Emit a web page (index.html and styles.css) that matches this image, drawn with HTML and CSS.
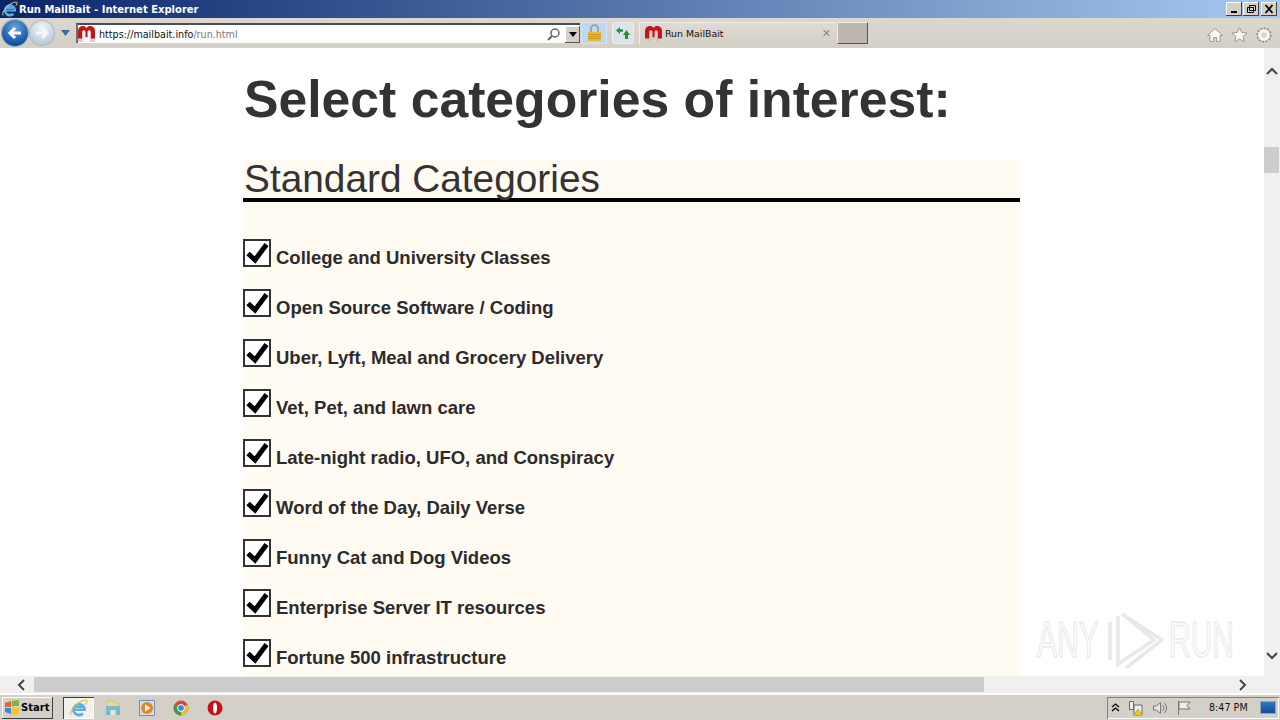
FILE: index.html
```html
<!DOCTYPE html>
<html lang="en">
<head>
    <meta charset="UTF-8">
    <title>Run MailBait - Internet Explorer</title>
    <link rel="stylesheet" href="styles.css">
</head>
<body>
    <svg class="defs" width="0" height="0">
        <symbol id="magnet" viewBox="1 2.500 16 13.500" preserveAspectRatio="none">
            <path d="M1 16V7a4.500 4.500 0 0 1 8-2.800A4.500 4.500 0 0 1 17 7v9h-4V7.500a1.500 1.500 0 0 0-3 0V12H8V7.500a1.500 1.500 0 0 0-3 0V16z" fill="#c4141c"/>
            <path d="M1 13h4v3H1zM13 13h4v3h-4z" fill="#d0d0d0"/>
        </symbol>
        <symbol id="check" viewBox="0 0 24 24">
            <path d="M3 12.500L10 19 21.500 3.500" fill="none" stroke="#000" stroke-width="5"/>
        </symbol>
        <symbol id="ie" viewBox="0 0 16 16">
            <path d="M3 9.500h10a5 5 0 1 0-1.500 3.500M4 6.800h7M3 9.500a5 5 0 0 0 8 3.500" fill="none" stroke="#58aee4" stroke-width="2.200"/>
            <path d="M1 14.500C-1 11 7 1 14.500 1c1.500 1 0 3-1 4" fill="none" stroke="#e8c040" stroke-width="1"/>
        </symbol>
    </svg>

    <div class="titlebar">
        <svg class="ie-logo" width="16" height="16"><use href="#ie"/></svg>
        <span class="title-text">Run MailBait - Internet Explorer</span>
        <div class="win-buttons">
            <span class="win-btn"><svg width="11" height="10"><path d="M2 7h6v2H2z" fill="#000"/></svg></span>
            <span class="win-btn"><svg width="11" height="10"><path d="M3.500 1.500h6v5h-6zM1.500 3.500h6v5h-6z" fill="#d4d0c8" stroke="#000"/></svg></span>
            <span class="win-btn win-close"><svg width="11" height="10"><path d="M1.500 1l7 8M8.500 1l-7 8" stroke="#000" stroke-width="1.800"/></svg></span>
        </div>
    </div>

    <div class="toolbar">
        <span class="nav-btn nav-back">
            <svg width="18" height="18" viewBox="0 0 18 18"><path d="M15 9H5M9 4L4 9l5 5" fill="none" stroke="#fff" stroke-width="3"/></svg>
        </span>
        <span class="nav-btn nav-forward">
            <svg width="18" height="18" viewBox="0 0 18 18"><path d="M3 9h10M9 4l5 5-5 5" fill="none" stroke="#f4f7fa" stroke-width="3"/></svg>
        </span>
        <svg class="nav-drop" width="9" height="6"><path d="M0 0h9L4.500 6z" fill="#2f6fa8"/></svg>

        <div class="address">
            <svg class="fav" width="17" height="16"><use href="#magnet"/></svg>
            <span class="url"><span class="url-dark">https://mailbait.info</span>/run.html</span>
            <svg class="search" width="15" height="15" viewBox="0 0 15 15"><circle cx="9" cy="6" r="4" fill="none" stroke="#666" stroke-width="1.500"/><path d="M6 9l-4 4" stroke="#666" stroke-width="2"/></svg>
            <span class="addr-drop"><svg width="8" height="5"><path d="M0 0h8L4 5z" fill="#000"/></svg></span>
        </div>

        <span class="lock">
            <svg width="15" height="18" viewBox="0 0 15 18"><path d="M4 8V4.500a3.500 3.500 0 0 1 7 0V8" fill="none" stroke="#a89868" stroke-width="1.600"/><path d="M1 8h13v9H1z" fill="#e8b830"/><path d="M1 10.500h13M1 12.500h13M1 14.500h13" stroke="#c89820"/></svg>
        </span>
        <span class="refresh">
            <svg width="16" height="14" viewBox="0 0 16 14"><path d="M1 4.500L5 1v2.200h3v2.600H5V8zM15 9l-3.500-5L8 9h2v4h3V9z" fill="#2f8a3a"/></svg>
        </span>

        <div class="tab">
            <svg width="17" height="16"><use href="#magnet"/></svg>
            <span class="tab-title">Run MailBait</span>
            <span class="tab-close">&#10005;</span>
        </div>
        <span class="new-tab"></span>

        <div class="tools">
            <svg width="16" height="16" viewBox="0 0 16 16"><path d="M.500 8.500L8 1.500l7.500 7h-2.500v6H9.500v-4h-3v4H3v-6z" fill="#f8f7f3" stroke="#8c8c86" stroke-width=".8"/></svg>
            <svg width="17" height="16" viewBox="0 0 16 16"><path d="M8 .500l2.200 4.900 5.300.6-4 3.500 1.200 5.300L8 12.100l-4.700 2.700 1.200-5.300-4-3.500 5.300-.6z" fill="#f8f7f3" stroke="#8c8c86" stroke-width=".8"/></svg>
            <svg width="16" height="16" viewBox="0 0 16 16"><circle cx="8" cy="8" r="4.300" fill="none" stroke="#f8f7f3" stroke-width="3"/><circle cx="8" cy="8" r="6.800" fill="none" stroke="#8c8c86" stroke-width="1.600" stroke-dasharray="2 1.500"/></svg>
        </div>
    </div>

    <div class="viewport">
        <main class="page">
            <h1>Select categories of interest:</h1>
            <section class="categories">
                <h2>Standard Categories</h2>
                <ul class="cat-list">
                    <li><span class="box"><svg width="24" height="24"><use href="#check"/></svg></span>College and University Classes</li>
                    <li><span class="box"><svg width="24" height="24"><use href="#check"/></svg></span>Open Source Software / Coding</li>
                    <li><span class="box"><svg width="24" height="24"><use href="#check"/></svg></span>Uber, Lyft, Meal and Grocery Delivery</li>
                    <li><span class="box"><svg width="24" height="24"><use href="#check"/></svg></span>Vet, Pet, and lawn care</li>
                    <li><span class="box"><svg width="24" height="24"><use href="#check"/></svg></span>Late-night radio, UFO, and Conspiracy</li>
                    <li><span class="box"><svg width="24" height="24"><use href="#check"/></svg></span>Word of the Day, Daily Verse</li>
                    <li><span class="box"><svg width="24" height="24"><use href="#check"/></svg></span>Funny Cat and Dog Videos</li>
                    <li><span class="box"><svg width="24" height="24"><use href="#check"/></svg></span>Enterprise Server IT resources</li>
                    <li><span class="box"><svg width="24" height="24"><use href="#check"/></svg></span>Fortune 500 infrastructure</li>
                </ul>
            </section>
        </main>

        <div class="watermark">
            <span class="wm-text">ANY</span>
            <svg width="60" height="64" viewBox="0 0 60 64"><path d="M4 14v38M12 8v48l36-24L16 6l40 26-36 28" fill="none" stroke="#e8e8e8" stroke-width="3.500"/></svg>
            <span class="wm-text">RUN</span>
        </div>

        <div class="vscroll">
            <svg class="arrow" width="16" height="16"><path d="M3 10l5-5 5 5" fill="none" stroke="#444" stroke-width="2"/></svg>
            <div class="vtrack"><div class="vthumb"></div></div>
            <svg class="arrow" width="16" height="16"><path d="M3 5l5 5 5-5" fill="none" stroke="#444" stroke-width="2"/></svg>
        </div>
    </div>

    <div class="hscroll">
        <svg class="arrow" width="16" height="16"><path d="M10 3L5 8l5 5" fill="none" stroke="#444" stroke-width="2"/></svg>
        <div class="htrack"><div class="hthumb"></div></div>
        <svg class="arrow" width="16" height="16"><path d="M6 3l5 5-5 5" fill="none" stroke="#444" stroke-width="2"/></svg>
    </div>

    <div class="taskbar">
        <span class="start">
            <svg width="16" height="15" viewBox="0 0 16 15"><path d="M1 3l6-2v6H1z" fill="#e8622a"/><path d="M8 1l7-1v6H8z" fill="#7ab83c"/><path d="M1 8h6v6l-6-2z" fill="#3a8ad8"/><path d="M8 8h7v6l-7 1z" fill="#f2c230"/></svg>
            Start
        </span>
        <span class="task-ie">
            <svg width="18" height="18"><use href="#ie"/></svg>
        </span>
        <span class="task-icon">
            <svg width="16" height="16" viewBox="0 0 16 16"><path d="M2 1h6l1 2h5v5H2z" fill="#ecd98c" stroke="#c8b468" stroke-width=".6"/><path d="M1 6h14v9H1z" fill="#7fb8cc"/><path d="M5.500 10h5v5h-5z" fill="#e8e6e0"/></svg>
        </span>
        <span class="task-icon">
            <svg width="16" height="16" viewBox="0 0 16 16"><path d="M.500.500h15v15H.500z" fill="#cfe0f0" stroke="#6a8fc0"/><circle cx="8" cy="8" r="6" fill="#e88420"/><path d="M6 4.500L11.500 8 6 11.500z" fill="#fff"/></svg>
        </span>
        <span class="task-icon">
            <svg width="16" height="16" viewBox="0 0 16 16"><circle cx="8" cy="8" r="7.500" fill="#d8453a"/><path d="M8 8L14.500 4.500A7.500 7.500 0 0 1 8 15.500z" fill="#e8c030"/><path d="M8 8L8 15.500A7.500 7.500 0 0 1 1.500 4.500z" fill="#3f9a48"/><circle cx="8" cy="8" r="3.500" fill="#4a86d8" stroke="#fff"/></svg>
        </span>
        <span class="task-icon">
            <svg width="16" height="16" viewBox="0 0 16 16"><circle cx="8" cy="8" r="7.500" fill="#c8101a"/><ellipse cx="8" cy="8" rx="2" ry="5.500" fill="#fff"/></svg>
        </span>

        <div class="tray">
            <svg width="9" height="10"><path d="M1 4l3.500-3L8 4M1 8l3.500-3L8 8" fill="none" stroke="#000" stroke-width="1.300"/></svg>
            <svg width="16" height="16" viewBox="0 0 16 16"><path d="M1.500 1.500h4v8h-4zM6 5h8v9H6z" fill="#eee" stroke="#666"/><path d="M10 9l4.500 6.500h-9z" fill="#f2c81e" stroke="#a07c10" stroke-width=".5"/></svg>
            <svg width="16" height="16" viewBox="0 0 16 16"><path d="M1.500 6h3l4-3.500v11l-4-3.500h-3z" fill="#e8e6e0" stroke="#777"/><path d="M10.500 5a4 4 0 0 1 0 6M12.500 3a7 7 0 0 1 0 10" fill="none" stroke="#777"/></svg>
            <svg width="16" height="16" viewBox="0 0 16 16"><path d="M2.500 1v14" stroke="#777"/><path d="M3 2h11l-3 3.500 3 3.500H3z" fill="#eeece6" stroke="#777"/></svg>
            <span class="clock">8:47 PM</span>
            <span class="show-desktop"></span>
        </div>
    </div>
</body>
</html>
```

FILE: styles.css
```css
html, body {
    margin: 0;
    padding: 0;
    height: 720px;
    overflow: hidden;
}
body {
    display: flex;
    flex-direction: column;
    background: #d4d0c8;
    font-family: "Liberation Sans", Arial, sans-serif;
}
.defs { position: absolute; }
svg { display: block; flex: none; }

/* title bar */
.titlebar {
    height: 18px;
    display: flex;
    align-items: center;
    padding: 0 2px;
    background: linear-gradient(to right, #0a246a, #3f5f98 35%, #a6caf0);
    color: #fff;
    font-family: "DejaVu Sans", sans-serif;
    font-size: 10px;
    font-weight: bold;
}
.title-text { margin-left: 1px; }
.win-buttons {
    display: flex;
    gap: 1px;
    margin-left: auto;
    margin-right: 1px;
}
.win-btn {
    width: 16px;
    height: 14px;
    display: flex;
    align-items: center;
    justify-content: center;
    background: #d4d0c8;
    box-shadow: inset -1px -1px #404040, inset 1px 1px #fff;
}
.win-close { margin-left: 1px; }

/* toolbar */
.toolbar {
    height: 30px;
    display: flex;
    align-items: center;
    background: linear-gradient(to bottom, #dcd6ce, #d4d0c8);
}
.nav-btn {
    display: flex;
    align-items: center;
    justify-content: center;
    border-radius: 50%;
}
.nav-back {
    width: 26px;
    height: 26px;
    margin-left: 2px;
    background: radial-gradient(circle at 50% 30%, #6aa4dc, #0f4f9e 75%);
    box-shadow: 0 0 0 1px #9ab;
}
.nav-forward {
    width: 24px;
    height: 24px;
    margin-left: 2px;
    background: radial-gradient(circle at 50% 30%, #f2f6fa, #b6c8d8 80%);
    box-shadow: 0 0 0 1px #aab4bc;
}
.nav-drop { margin: 0 6px 0 7px; }
.address {
    width: 504px;
    height: 20px;
    display: flex;
    align-items: center;
    background: #fff;
    border-top: 2px solid #4c4c58;
    border-left: 2px solid #6c6c70;
    box-sizing: border-box;
}
.url {
    margin-left: 4px;
    font-family: "DejaVu Sans", sans-serif;
    font-size: 9.6px;
    color: #777;
}
.url-dark { color: #111; }
.search { margin-left: auto; margin-right: 4px; }
.addr-drop {
    width: 15px;
    height: 17px;
    display: flex;
    align-items: center;
    justify-content: center;
    background: #d4d0c8;
    box-shadow: inset -1px -1px #555, inset 1px 1px #fff;
}
.lock {
    width: 26px;
    height: 22px;
    margin-left: 1px;
    display: flex;
    align-items: center;
    justify-content: center;
    background: #bcd8f6;
    border: 1px solid #d6e4f2;
    box-sizing: border-box;
}
.refresh {
    width: 22px;
    height: 22px;
    margin-left: 5px;
    display: flex;
    align-items: center;
    justify-content: center;
    background: #dbe4e8;
    border: 1px solid #eef0f0;
    border-radius: 3px;
    box-sizing: border-box;
}
.tab {
    width: 196px;
    height: 22px;
    margin-left: 5px;
    padding-left: 5px;
    display: flex;
    align-items: center;
    box-sizing: border-box;
    background: linear-gradient(to bottom, #dfdad2, #d4d0c8);
    border-top: 1px solid #eee;
    border-left: 1px solid #eee;
    font-family: "DejaVu Sans", sans-serif;
    font-size: 9.4px;
    color: #111;
}
.tab-title { margin-left: 3px; }
.tab-close {
    margin-left: auto;
    margin-right: 4px;
    font-size: 11px;
    font-weight: bold;
    color: #888;
}
.new-tab {
    width: 31px;
    height: 22px;
    margin-left: 2px;
    box-sizing: border-box;
    background: #bdb7b0;
    border: 1px solid #555;
    border-top-color: #eee;
    border-left-color: #eee;
}
.tools {
    display: flex;
    gap: 8px;
    margin-left: auto;
    margin-right: 8px;
    padding-top: 4px;
}

/* page area */
.viewport {
    position: relative;
    height: 628px;
    display: flex;
    background: #fff;
    overflow: hidden;
}
.page {
    flex: 1;
    padding-left: 243px;
    padding-right: 244px;
    overflow: hidden;
}
h1 {
    margin: 20px 0 30px 1px;
    font-size: 51.7px;
    line-height: 62px;
    font-weight: bold;
    color: #333;
}
.categories {
    background: #fffaf2;
    height: 600px;
}
h2 {
    margin: 0;
    padding-left: 1px;
    height: 38px;
    font-size: 38.8px;
    line-height: 38px;
    font-weight: normal;
    color: #333;
    border-bottom: 4px solid #000;
}
.cat-list {
    list-style: none;
    margin: 0;
    padding: 37px 0 0;
}
.cat-list li {
    height: 50px;
    display: flex;
    align-items: flex-start;
    font-size: 18.5px;
    line-height: 37px;
    font-weight: bold;
    color: #2b2b2b;
}
.box {
    width: 24px;
    height: 24px;
    margin-right: 5px;
    border: 2px solid #333;
    background: #fff;
    display: block;
}
.watermark {
    position: absolute;
    left: 1037px;
    top: 560px;
    display: flex;
    align-items: center;
    gap: 3px;
    font-size: 50px;
}
.wm-text {
    display: block;
    width: 66px;
    white-space: nowrap;
    color: #fbfbfb;
    -webkit-text-stroke: 1px #e4e4e4;
    transform: scaleX(.6);
    transform-origin: left center;
}

/* scrollbars */
.vscroll {
    width: 16px;
    display: flex;
    flex-direction: column;
    background: #f0f0f0;
}
.vtrack { flex: 1; }
.vthumb {
    width: 15px;
    height: 26px;
    margin-top: 67px;
    background: #cdcdcd;
}
.arrow { margin-top: 16px; }
.vscroll .arrow:last-child { margin: 0 0 12px; }
.hscroll {
    height: 17px;
    display: flex;
    align-items: center;
    background: #f0f0f0;
    border-bottom: 1px solid #fff;
    padding-left: 14px;
    padding-right: 30px;
}
.hscroll .arrow { margin: 0; }
.htrack { flex: 1; padding-left: 4px; }
.hthumb {
    width: 950px;
    height: 15px;
    background: #cdcdcd;
}

/* taskbar */
.taskbar {
    flex: 1;
    display: flex;
    align-items: center;
    background: #d4d0c8;
    border-top: 1px solid #fff;
}
.start {
    width: 51px;
    height: 22px;
    margin-left: 2px;
    display: flex;
    align-items: center;
    gap: 1px;
    padding-left: 2px;
    box-sizing: border-box;
    box-shadow: inset -1px -1px #404040, inset 1px 1px #fff;
    font-family: "DejaVu Sans", sans-serif;
    font-size: 10px;
    font-weight: bold;
    color: #000;
}
.task-ie {
    width: 31px;
    height: 22px;
    margin-left: 10px;
    display: flex;
    align-items: center;
    justify-content: center;
    box-sizing: border-box;
    background: #f2f1ee;
    box-shadow: inset 1px 1px #404040, inset -1px -1px #fff;
}
.task-icon {
    width: 16px;
    margin-left: 18px;
}
.task-ie + .task-icon { margin-left: 11px; }
.tray {
    width: 172px;
    height: 22px;
    margin-left: auto;
    margin-right: 1px;
    padding: 0 3px 0 4px;
    display: flex;
    align-items: center;
    gap: 8px;
    box-sizing: border-box;
    box-shadow: inset 1px 1px #808080, inset -1px -1px #fff;
}
.clock {
    margin-left: 9px;
    font-family: "DejaVu Sans", sans-serif;
    font-size: 9.6px;
    color: #111;
}
.show-desktop {
    width: 16px;
    height: 13px;
    margin-left: auto;
    background: linear-gradient(to bottom, #2f78c8, #164a90);
    border: 1px solid #8ab;
    box-sizing: border-box;
}
```
